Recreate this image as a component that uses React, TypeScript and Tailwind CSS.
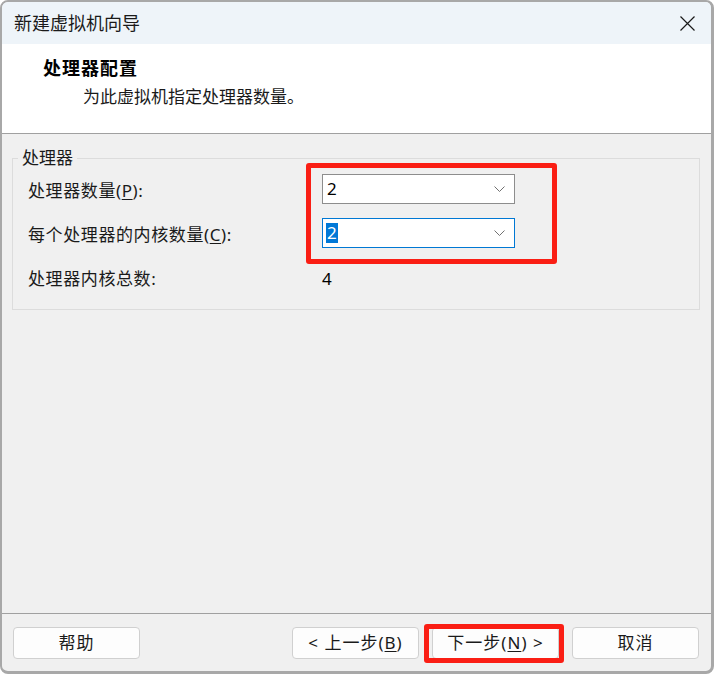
const font = { fontFamily: '"Noto Sans", "Noto Sans CJK SC", sans-serif' };

function Combo({ value, focused }: { value: string; focused?: boolean }) {
    return (
        <div
            className={`flex h-[30px] w-[193px] items-center justify-between bg-white pl-[3px] pr-[9px] ${
                focused ? "border border-[#0078d4]" : "border border-[#8d8d8d]"
            }`}
        >
            {focused ? (
                <span className="bg-[#0078d7] px-[1px] text-[17px] leading-[20px] text-white">{value}</span>
            ) : (
                <span className="px-[1px] text-[17px] leading-[20px] text-black">{value}</span>
            )}
            <svg width="11" height="6" viewBox="0 0 11 6" fill="none">
                <path d="M0.5 0.5 L5.5 5.5 L10.5 0.5" stroke="#707070" strokeWidth="1" />
            </svg>
        </div>
    );
}

function Button({ children }: { children: React.ReactNode }) {
    return (
        <button className="flex h-[32px] w-[127px] items-center justify-center rounded-[4px] border border-[#d0d0d0] bg-[#fdfdfd] text-[17px] tracking-[1px] text-[#1a1a1a]">
            {children}
        </button>
    );
}

export default function App() {
    return (
        <div className="h-[674px] w-[714px] bg-white" style={font}>
            <div className="relative flex h-full w-full flex-col overflow-hidden rounded-[8px] border-t-2 border-l-2 border-r-[3px] border-b-[3px] border-[#a8a8a8] bg-[#f0f0f0]">
                {/* Title bar */}
                <div className="flex h-[42px] shrink-0 items-center justify-between bg-[#eef4f9] pl-[12px] pr-[16px]">
                    <span className="text-[18px] text-[#1a1a1a]">新建虚拟机向导</span>
                    <svg width="15" height="15" viewBox="0 0 15 15">
                        <path d="M0.5 0.5 L14.5 14.5 M14.5 0.5 L0.5 14.5" stroke="#1a1a1a" strokeWidth="1.2" />
                    </svg>
                </div>

                {/* Header */}
                <div className="h-[90px] shrink-0 border-b border-[#a0a0a0] bg-white pl-[41px] pt-[12px]">
                    <div className="text-[18px] font-bold leading-[24px] tracking-[1px] text-black">处理器配置</div>
                    <div className="mt-[5px] pl-[40px] text-[17px] leading-[24px] text-[#1a1a1a]">为此虚拟机指定处理器数量。</div>
                </div>

                {/* Body */}
                <div className="flex-1 px-[10px] pt-[14px]">
                    <fieldset className="w-[688px] border border-[#dcdcdc] pl-[15px] pb-[15px]">
                        <legend className="ml-[-10px] px-[4px] text-[17px] leading-[20px] text-[#1a1a1a]">处理器</legend>
                        <div className="grid grid-cols-[294px_1fr] gap-y-[14px] pt-[6px] text-[17px] tracking-[0.6px] text-[#1a1a1a]">
                            <div className="flex h-[30px] items-center pt-[4px]">
                                处理器数量(<span className="underline underline-offset-2">P</span>):
                            </div>
                            <Combo value="2" />
                            <div className="flex h-[30px] items-center pt-[4px]">
                                每个处理器的内核数量(<span className="underline underline-offset-2">C</span>):
                            </div>
                            <Combo value="2" focused />
                            <div className="mt-[2px] flex h-[30px] items-center">处理器内核总数:</div>
                            <div className="mt-[2px] flex h-[30px] items-center text-black">4</div>
                        </div>
                    </fieldset>
                </div>

                {/* Footer */}
                <div className="flex h-[58px] shrink-0 items-start border-t border-[#a0a0a0] pl-[11px] pr-[12px] pt-[13px]">
                    <Button>帮助</Button>
                    <div className="ml-auto flex gap-[13px]">
                        <Button>
                            &lt; 上一步(<span className="underline underline-offset-2">B</span>)
                        </Button>
                        <Button>
                            下一步(<span className="underline underline-offset-2">N</span>) &gt;
                        </Button>
                        <Button>取消</Button>
                    </div>
                </div>

                {/* Red annotation boxes */}
                <div className="pointer-events-none absolute left-[304px] top-[161px] h-[101px] w-[251px] rounded-[3px] border-[5px] border-[#fa1e14]" />
                <div className="pointer-events-none absolute left-[422px] top-[622px] h-[39px] w-[140px] rounded-[3px] border-[5px] border-[#fa1e14]" />
            </div>
        </div>
    );
}
